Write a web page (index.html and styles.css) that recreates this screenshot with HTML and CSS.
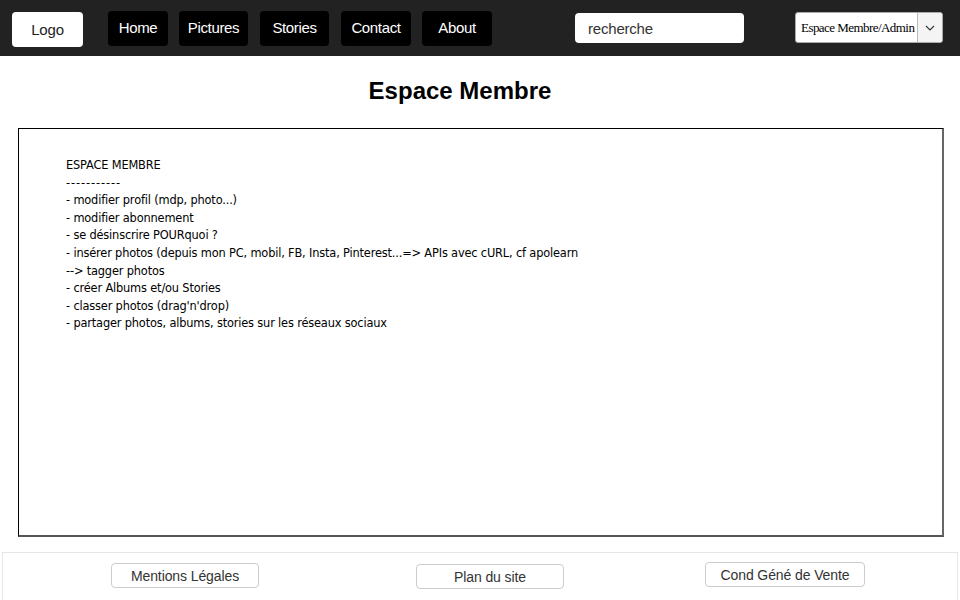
FILE: index.html
```html
<!DOCTYPE html>
<html lang="fr">
<head>
<meta charset="utf-8">
<title>Espace Membre</title>
<link rel="stylesheet" href="styles.css">
</head>
<body>
<header class="topbar">
  <a class="logo">Logo</a>
  <nav class="nav">
    <a class="nav-btn">Home</a>
    <a class="nav-btn">Pictures</a>
    <a class="nav-btn">Stories</a>
    <a class="nav-btn">Contact</a>
    <a class="nav-btn">About</a>
  </nav>
  <div class="search">recherche</div>
  <div class="select">
    <span class="select-label">Espace Membre/Admin</span>
    <span class="select-arrow"><svg width="10" height="6" viewBox="0 0 10 6"><path d="M1 1 L5 5 L9 1" fill="none" stroke="#333" stroke-width="1.1"/></svg></span>
  </div>
</header>
<h1 class="title">Espace Membre</h1>
<main class="content">
  <div class="notes">
    <p>ESPACE MEMBRE</p>
    <p class="rule">-----------</p>
    <p>- modifier profil (mdp, photo...)</p>
    <p>- modifier abonnement</p>
    <p>- se désinscrire POURquoi ?</p>
    <p>- insérer photos (depuis mon PC, mobil, FB, Insta, Pinterest...=&gt; APIs avec cURL, cf apolearn</p>
    <p>--&gt; tagger photos</p>
    <p>- créer Albums et/ou Stories</p>
    <p>- classer photos (drag'n'drop)</p>
    <p>- partager photos, albums, stories sur les réseaux sociaux</p>
  </div>
</main>
<footer class="footer">
  <a class="foot-btn b1">Mentions Légales</a>
  <a class="foot-btn b2">Plan du site</a>
  <a class="foot-btn b3">Cond Géné de Vente</a>
</footer>
</body>
</html>
```
FILE: styles.css
```css
* { box-sizing: border-box; }
body {
  margin: 0;
  width: 960px;
  height: 600px;
  overflow: hidden;
  background: #fff;
  font-family: "Liberation Sans", Arial, sans-serif;
}
.topbar {
  height: 56px;
  background: #222;
  display: flex;
  align-items: flex-start;
  padding: 11px 0 0 12px;
}
.logo {
  width: 71px;
  height: 35px;
  margin-top: 1px;
  background: #fff;
  border-radius: 4px;
  color: #222;
  font-size: 15px;
  letter-spacing: -0.2px;
  display: flex;
  align-items: center;
  justify-content: center;
  padding-bottom: 1px;
}
.nav {
  display: flex;
  margin-left: 25px;
}
.nav-btn {
  height: 35px;
  background: #000;
  border-radius: 4px;
  color: #fff;
  font-size: 15px;
  letter-spacing: -0.35px;
  display: flex;
  align-items: center;
  justify-content: center;
  padding-bottom: 2px;
}
.nav-btn:nth-child(1) { width: 60px; }
.nav-btn:nth-child(2) { width: 69px; margin-left: 11px; }
.nav-btn:nth-child(3) { width: 69px; margin-left: 12px; }
.nav-btn:nth-child(4) { width: 70px; margin-left: 12px; }
.nav-btn:nth-child(5) { width: 70px; margin-left: 11px; }
.search {
  margin-left: 83px;
  margin-top: 2px;
  width: 169px;
  height: 30px;
  background: #fff;
  border-radius: 4px;
  color: #333;
  font-size: 15px;
  letter-spacing: -0.2px;
  padding-left: 13px;
  display: flex;
  align-items: center;
}
.select {
  margin-left: 51px;
  margin-top: 1px;
  width: 148px;
  height: 31px;
  background: #fff;
  border-radius: 3px;
  border: 1px solid #aaa;
  display: flex;
}
.select-label {
  flex: 1;
  font-family: "Liberation Serif", "Times New Roman", serif;
  font-size: 13px;
  color: #000;
  display: flex;
  align-items: center;
  padding-left: 5px;
  white-space: nowrap;
  letter-spacing: -0.55px;
  overflow: hidden;
}
.select-arrow {
  width: 25px;
  border-left: 1px solid #bbb;
  background: #f4f4f4;
  display: flex;
  align-items: center;
  justify-content: center;
  border-radius: 0 3px 3px 0;
}
.title {
  margin: 21px 0 0;
  padding-right: 40px;
  height: 51px;
  text-align: center;
  font-size: 24px;
  font-weight: bold;
  color: #000;
  line-height: 28px;
}
.content {
  margin: 0 16px 0 18px;
  height: 409px;
  border-top: 1px solid #000;
  border-left: 1px solid #000;
  border-right: 2px solid #666;
  border-bottom: 2px solid #555;
}
.notes {
  padding: 28px 0 0 47px;
  font-family: "Comic Sans MS", "DejaVu Sans", sans-serif;
  font-size: 11.4px;
  color: #000;
  letter-spacing: -0.17px;
}
.notes p {
  margin: 0;
  line-height: 17.6px;
}
.notes .rule {
  letter-spacing: 0.9px;
}
.footer {
  margin: 15px 2px 0;
  height: 49px;
  border: 1px solid #e6e6e6;
  border-bottom: 0;
  position: relative;
}
.foot-btn {
  position: absolute;
  height: 25px;
  border: 1px solid #ccc;
  border-radius: 4px;
  background: #fff;
  color: #333;
  font-size: 14px;
  display: flex;
  align-items: center;
  justify-content: center;
  letter-spacing: -0.1px;
}
.b1 { left: 108px; top: 10px; width: 148px; }
.b2 { left: 413px; top: 11px; width: 148px; }
.b3 { left: 702px; top: 9px; width: 160px; }
```
